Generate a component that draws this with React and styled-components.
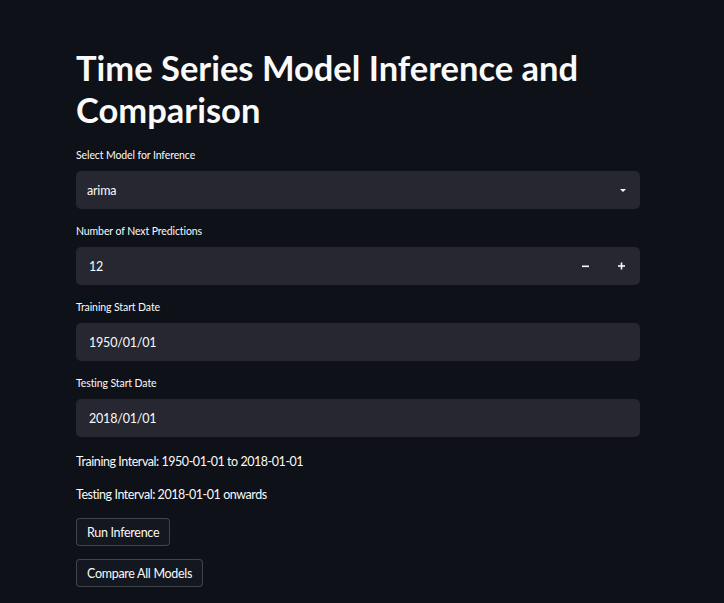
import React from "react";
import styled, { createGlobalStyle } from "styled-components";

const Global = createGlobalStyle`
  html, body { margin: 0; padding: 0; background: #0e1117; }
  body { font-family: "Source Sans Pro", Lato, "Noto Sans", sans-serif; color: #fafafa; }
  * { box-sizing: border-box; }
`;

const Page = styled.div`
  min-height: 603px;
  background: #0e1117;
  padding: 47px 0 0 76px;
`;

const Main = styled.div`
  width: 564px;
  display: flex;
  flex-direction: column;
`;

const Title = styled.h1`
  margin: 0 0 16px;
  font-family: "Source Sans Pro", Lato, sans-serif;
  font-weight: 700;
  font-size: 34.5px;
  line-height: 42px;
  color: #fafafa;
`;

const Field = styled.div`
  display: flex;
  flex-direction: column;
  gap: 8px;
  margin-bottom: 14px;
`;

const Label = styled.label`
  font-size: 10.5px;
  line-height: 16px;
  letter-spacing: -0.1px;
  color: #fafafa;
`;

const Box = styled.div`
  height: 38px;
  background: #262730;
  border-radius: 5px;
  display: flex;
  align-items: center;
  padding-left: ${(p) => p.$pad || 12}px;
  font-size: 12.5px;
  letter-spacing: -0.2px;
  color: #fafafa;
`;

const Value = styled.span`
  flex: 1;
`;

const Caret = styled.svg`
  width: 10px;
  height: 10px;
  margin-right: 12px;
`;

const Stepper = styled.button`
  width: 36px;
  height: 38px;
  border: none;
  background: transparent;
  color: #fafafa;
  display: flex;
  align-items: center;
  justify-content: center;
  padding: 0;
`;

const Text = styled.p`
  margin: ${(p) => p.$mt || 0}px 0 ${(p) => p.$mb || 12}px;
  font-size: 12.5px;
  line-height: 20px;
  letter-spacing: -0.45px;
  color: #fafafa;
`;

const Button = styled.button`
  align-self: flex-start;
  height: 28px;
  padding: 0 10px;
  margin-bottom: ${(p) => p.$mb || 0}px;
  background: #13171f;
  border: 1px solid rgba(250, 250, 250, 0.2);
  border-radius: 4px;
  color: #fafafa;
  font-family: "Source Sans Pro", Lato, sans-serif;
  font-size: 12.5px;
  letter-spacing: -0.3px;
`;

export default function App() {
  return (
    <>
      <Global />
      <Page>
        <Main>
          <Title>Time Series Model Inference and Comparison</Title>
          <Field>
            <Label>Select Model for Inference</Label>
            <Box $pad={11}>
              <Value>arima</Value>
              <Caret viewBox="0 0 10 10">
                <path d="M2 4h6L5 7z" fill="#fafafa" />
              </Caret>
            </Box>
          </Field>
          <Field>
            <Label>Number of Next Predictions</Label>
            <Box $pad={13}>
              <Value>12</Value>
              <Stepper aria-label="minus">
                <svg width="10" height="10" viewBox="0 0 10 10">
                  <rect x="1" y="4.5" width="7" height="1.6" fill="#fafafa" />
                </svg>
              </Stepper>
              <Stepper aria-label="plus">
                <svg width="10" height="10" viewBox="0 0 10 10">
                  <rect x="1" y="4.2" width="7" height="1.6" fill="#fafafa" />
                  <rect x="3.7" y="1.5" width="1.6" height="7" fill="#fafafa" />
                </svg>
              </Stepper>
            </Box>
          </Field>
          <Field>
            <Label>Training Start Date</Label>
            <Box $pad={13}>1950/01/01</Box>
          </Field>
          <Field>
            <Label>Testing Start Date</Label>
            <Box $pad={13}>2018/01/01</Box>
          </Field>
          <Text $mt={1} $mb={13}>Training Interval: 1950-01-01 to 2018-01-01</Text>
          <Text $mb={13}>Testing Interval: 2018-01-01 onwards</Text>
          <Button $mb={13}>Run Inference</Button>
          <Button>Compare All Models</Button>
        </Main>
      </Page>
    </>
  );
}
